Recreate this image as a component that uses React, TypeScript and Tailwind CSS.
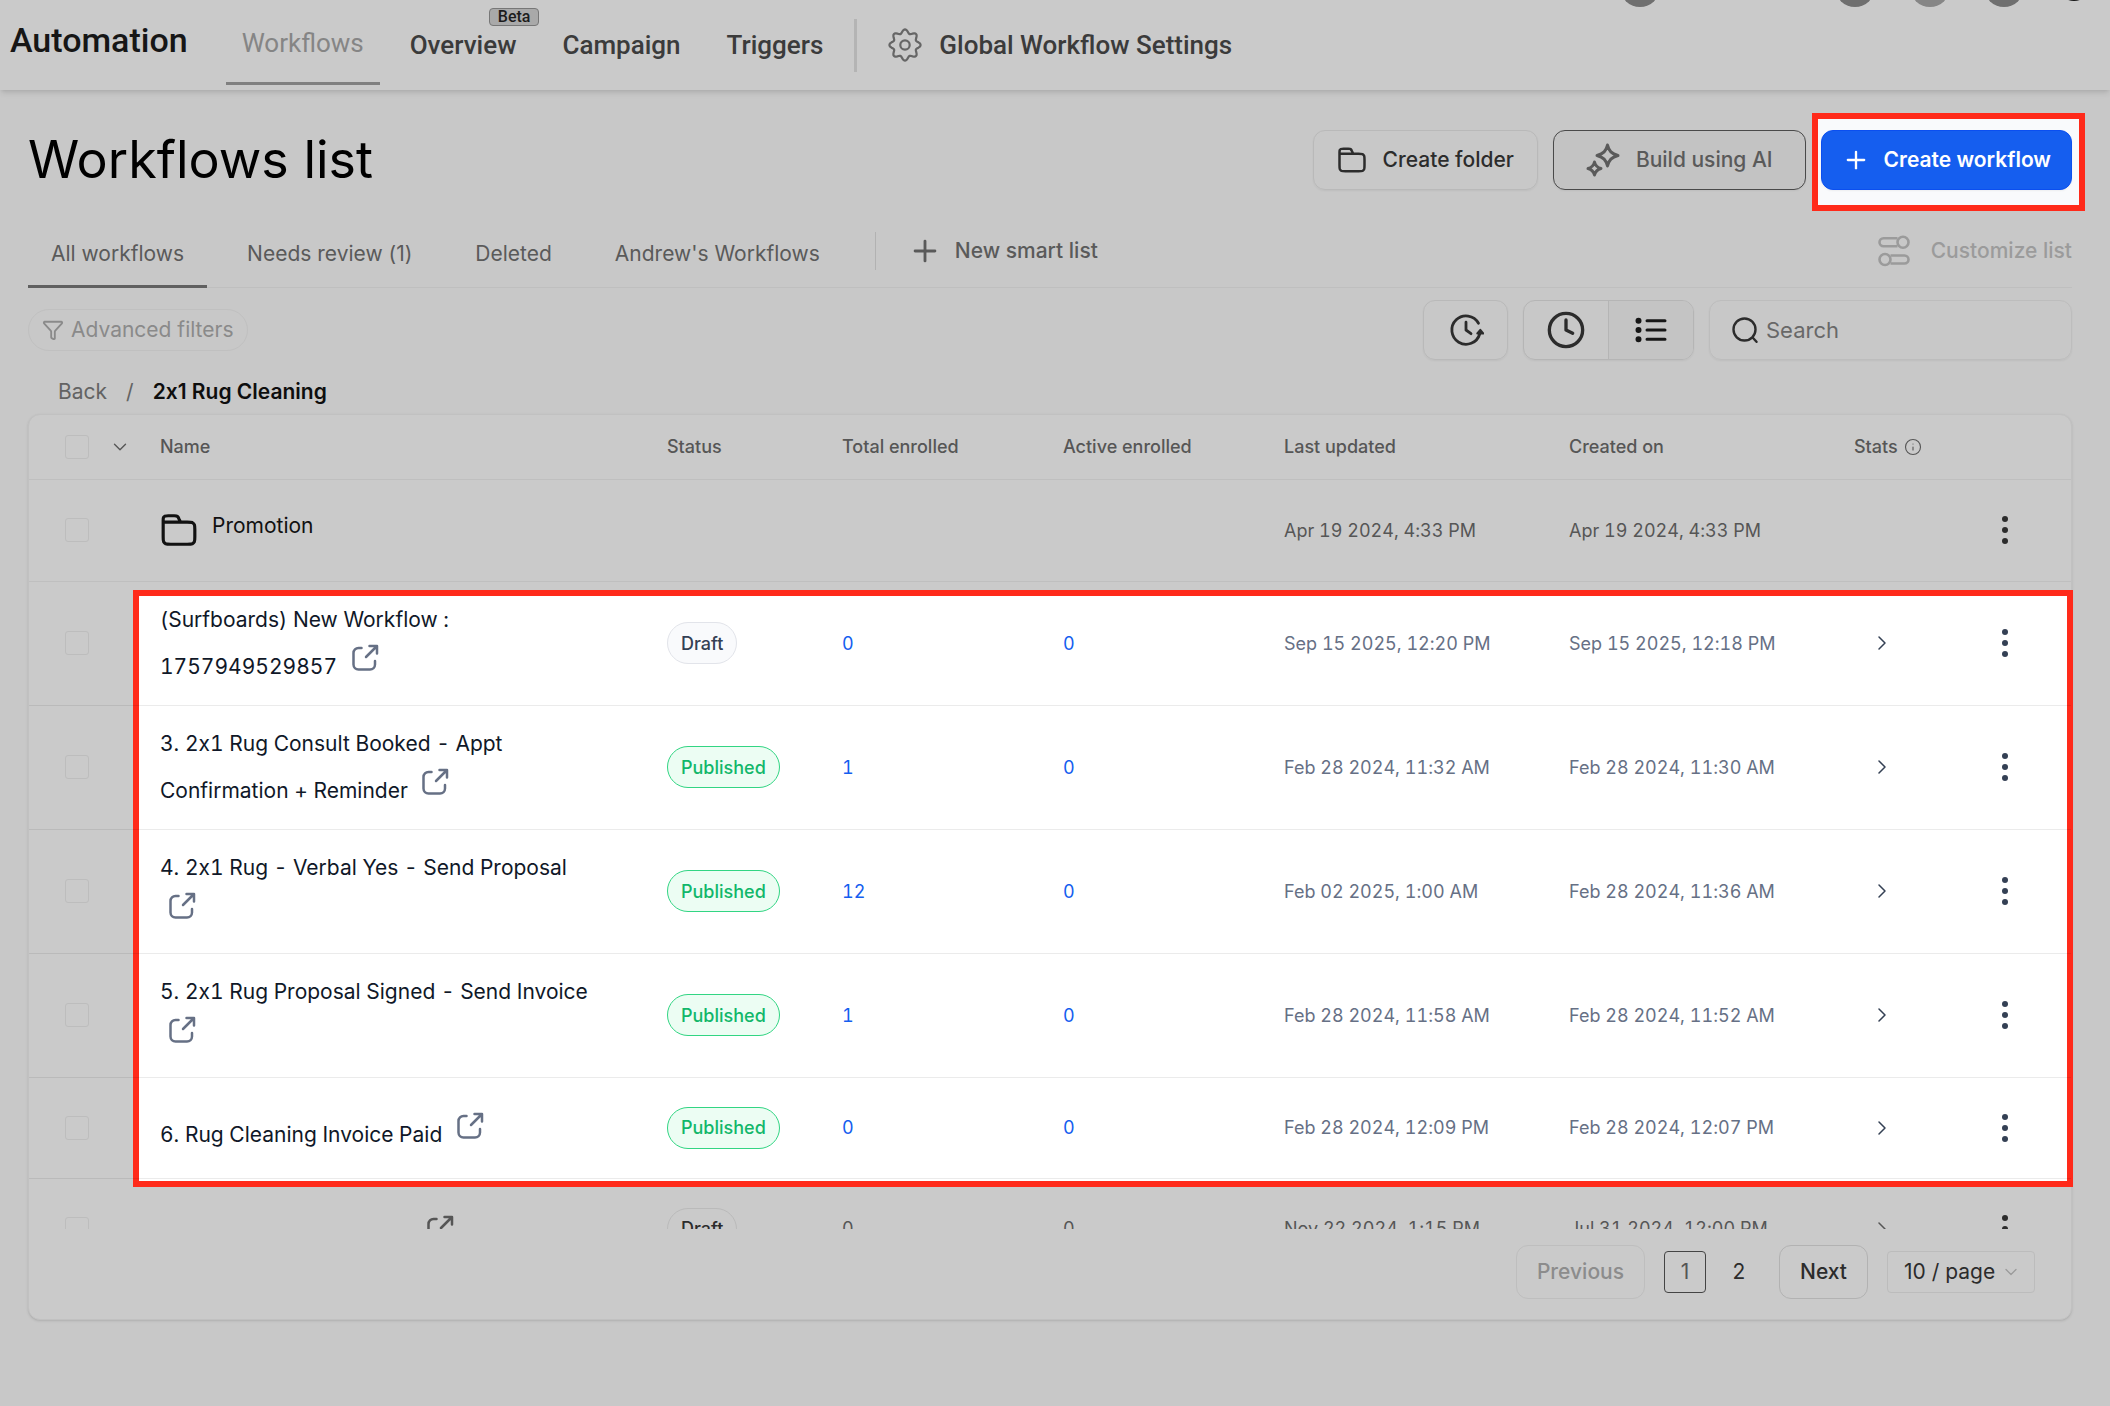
import { ChevronDown, ChevronRight, Clock, Funnel, Info, Plus } from "lucide-react";

type Row = {
  name: string;
  status: "Draft" | "Published";
  total: string;
  active: string;
  updated: string;
  created: string;
  tall?: boolean;
};

const rows: Row[] = [
  { name: "(Surfboards) New Workflow : 1757949529857", status: "Draft", total: "0", active: "0", updated: "Sep 15 2025, 12:20 PM", created: "Sep 15 2025, 12:18 PM", tall: true },
  { name: "3. 2x1 Rug Consult Booked - Appt Confirmation + Reminder", status: "Published", total: "1", active: "0", updated: "Feb 28 2024, 11:32 AM", created: "Feb 28 2024, 11:30 AM", tall: true },
  { name: "4. 2x1 Rug - Verbal Yes - Send Proposal", status: "Published", total: "12", active: "0", updated: "Feb 02 2025, 1:00 AM", created: "Feb 28 2024, 11:36 AM", tall: true },
  { name: "5. 2x1 Rug Proposal Signed - Send Invoice", status: "Published", total: "1", active: "0", updated: "Feb 28 2024, 11:58 AM", created: "Feb 28 2024, 11:52 AM", tall: true },
  { name: "6. Rug Cleaning Invoice Paid", status: "Published", total: "0", active: "0", updated: "Feb 28 2024, 12:09 PM", created: "Feb 28 2024, 12:07 PM" },
];

// Outline of the eight-lobed gear
const gearPoints = Array.from({ length: 96 }, (_, i) => {
  const angle = (i / 96) * Math.PI * 2;
  const radius = 13.7 + 1.9 * Math.cos(8 * angle);
  return `${(18 + radius * Math.sin(angle)).toFixed(2)},${(18 - radius * Math.cos(angle)).toFixed(2)}`;
}).join(" ");

function GearIcon({ className }: { className?: string }) {
  return (
    <svg viewBox="0 0 36 36" fill="none" stroke="currentColor" strokeWidth="2.200" strokeLinejoin="round" className={className}>
      <polygon points={gearPoints} />
      <circle cx="18" cy="18" r="4.700" />
    </svg>
  );
}

function FolderIcon({ className }: { className?: string }) {
  return (
    <svg viewBox="0 0 24 24" fill="none" stroke="currentColor" strokeWidth="2" strokeLinecap="round" strokeLinejoin="round" className={className}>
      <path d="M13 7l-1.1-2.2c-.3-.7-.5-1-.7-1.2a2 2 0 0 0-.8-.5C10.100 3 9.700 3 9 3H5.200c-1.100 0-1.700 0-2.100.2a2 2 0 0 0-.9.9C2 4.500 2 5.100 2 6.200V7m0 0h15.200c1.700 0 2.500 0 3.200.3a3 3 0 0 1 1.300 1.300c.3.700.3 1.500.3 3.200v4.400c0 1.700 0 2.500-.3 3.200a3 3 0 0 1-1.300 1.300c-.7.3-1.500.3-3.200.3H6.800c-1.700 0-2.500 0-3.200-.3a3 3 0 0 1-1.300-1.300C2 18.700 2 17.900 2 16.200V7z" />
    </svg>
  );
}

function SparkleIcon({ className }: { className?: string }) {
  return (
    <svg viewBox="0 0 34 34" fill="none" stroke="currentColor" strokeWidth="3" strokeLinejoin="round" className={className}>
      <path d="M21.500 2c1.500 6 4 8.800 10.500 10.500-6.500 1.700-9 4.500-10.500 10.500-1.500-6-4-8.800-10.500-10.500C17.500 10.800 20 8 21.500 2z" />
      <path d="M8.500 19c.9 3.800 2.500 5.500 6.500 6.500-4 1-5.600 2.700-6.500 6.500-.9-3.800-2.500-5.500-6.500-6.500 4-1 5.600-2.700 6.500-6.500z" />
    </svg>
  );
}

function TogglesIcon({ className }: { className?: string }) {
  return (
    <svg viewBox="0 0 32 32" fill="none" stroke="currentColor" strokeWidth="2.600" className={className}>
      <path d="M19.500 3.200H5.500a4 4 0 0 0 0 8h14M12.500 20.500h14a4 4 0 0 1 0 8h-14" />
      <circle cx="25" cy="7.200" r="5.500" />
      <circle cx="7" cy="24.500" r="5.500" />
    </svg>
  );
}

function OpenIcon({ className }: { className?: string }) {
  return (
    <svg viewBox="0 0 28 28" fill="none" stroke="currentColor" strokeWidth="2.500" strokeLinecap="round" strokeLinejoin="round" className={className}>
      <path d="M10.500 4H7.500a5 5 0 0 0-5 5v11.500a5 5 0 0 0 5 5H19a5 5 0 0 0 5-5V17" />
      <path d="M18.500 2H26v7.500M25.500 2.500L15 13" />
    </svg>
  );
}

function ClockForward({ className }: { className?: string }) {
  return (
    <svg viewBox="0 0 36 36" fill="none" stroke="currentColor" strokeWidth="2.800" strokeLinecap="round" strokeLinejoin="round" className={className}>
      <path d="M30.500 11.200A14.200 14.200 0 1 0 31.700 22M18 10.200V18l5 3.700" />
      <path d="M32.300 17.800l3 3.600h-6z" fill="currentColor" strokeWidth="2" />
    </svg>
  );
}

function SearchIcon({ className }: { className?: string }) {
  return (
    <svg viewBox="0 0 26 26" fill="none" stroke="currentColor" strokeWidth="2.400" strokeLinecap="round" className={className}>
      <circle cx="12.500" cy="12.500" r="11" />
      <path d="M20.800 20.800l3.700 4" />
    </svg>
  );
}

function BulletList({ className }: { className?: string }) {
  return (
    <svg viewBox="0 0 32 32" fill="none" stroke="currentColor" strokeLinecap="round" className={className}>
      <path d="M12 6.700h18M12 16h18M12 25.300h18" strokeWidth="3" />
      <path d="M3.500 6.700h.01M3.500 16h.01M3.500 25.300h.01" strokeWidth="6" />
    </svg>
  );
}

function Dots() {
  return (
    <button aria-label="Row actions" className="flex w-full justify-center">
      <svg viewBox="0 0 8 30" fill="currentColor" className="h-[30px] w-2">
        <circle cx="4" cy="4" r="3" />
        <circle cx="4" cy="15" r="3" />
        <circle cx="4" cy="26" r="3" />
      </svg>
    </button>
  );
}

function Tick({ label }: { label: string }) {
  return (
    <input
      type="checkbox"
      aria-label={label}
      className="block size-6 shrink-0 appearance-none rounded-[3px] border border-[#bdbdbd]"
    />
  );
}

function Badge({ status, dim }: { status: Row["status"]; dim?: boolean }) {
  const tone = dim
    ? "border-[#bababa] text-[#2c2c2c]"
    : status === "Draft"
      ? "border-[#e2e4ea] bg-[#f9fafc] text-[#344054]"
      : "border-[#32d583] bg-[#ecfdf3] text-[#12b76a]";
  return <span className={`inline-flex h-[42px] items-center rounded-full border px-[13px] font-medium ${tone}`}>{status}</span>;
}

const navLink = "font-medium text-[#3b3b3b]";
const button = "flex h-[60px] items-center rounded-xl border font-medium shadow-xs";

export default function App() {
  return (
    <div className="min-h-screen bg-[#c8c8c8] font-['Inter',sans-serif] text-[21px] text-[#2c2c2c] [font-variant-ligatures:no-contextual]">
      {/* Top navigation */}
      <header className="relative flex h-[90px] items-start overflow-hidden bg-[#cacaca] pl-[10px] font-['Roboto',sans-serif] text-[26px] shadow-md">
        <h1 className="pt-[22px] text-[34px] leading-9 font-medium text-[#161616]">Automation</h1>
        <nav className="ml-[38px] flex h-[90px] items-center">
          <a href="#workflows" className="flex h-[85px] items-center self-start border-b-[3px] border-[#808080] px-4 pt-1 text-[#858585]">Workflows</a>
          <a href="#overview" className={`relative ml-[30px] ${navLink}`}>
            Overview
            <span className="absolute -top-[18px] -right-[23px] rounded border border-[#777] bg-[#a9a9a9] px-2 text-base leading-4 text-[#1c1c1c]">Beta</span>
          </a>
          <a href="#campaign" className={`ml-[46px] ${navLink}`}>Campaign</a>
          <a href="#triggers" className={`ml-[46px] ${navLink}`}>Triggers</a>
          <span className="ml-[31px] h-[53px] w-[3px] bg-[#b4b4b4]" />
          <a href="#settings" className={`ml-[30px] flex items-center gap-4 ${navLink}`}>
            <GearIcon className="size-9 text-[#666]" />
            Global Workflow Settings
          </a>
        </nav>
        {/* Round actions scrolled past the top edge */}
        <div className="absolute -top-[33px] right-[19px] flex">
          <span className="mr-[175px] size-10 rounded-full bg-[#6f6f6f]" />
          <span className="mr-[35px] size-10 rounded-full bg-[#6f6f6f]" />
          <span className="mr-[34px] size-10 rounded-full bg-[#868686]" />
          <span className="mr-[33px] size-10 rounded-full bg-[#6f6f6f]" />
          <span className="size-[34px] rounded-full bg-[#161616]" />
        </div>
      </header>

      <main className="pr-[38px] pl-7">
        <div className="flex items-center justify-between pt-10">
          <h2 className="text-[52px] leading-[60px] text-black">Workflows list</h2>
          <div className="flex gap-[15px]">
            <button className={`${button} gap-4 border-[#b9b9b9] px-[23px]`}>
              <FolderIcon className="size-[30px]" />
              Create folder
            </button>
            <button className={`${button} gap-4 border-[#4a4a4a] bg-[#c3c3c3] px-8 text-[#5a5a5a]`}>
              <SparkleIcon className="size-[34px]" />
              Build using AI
            </button>
            <div className="relative">
              <span className="absolute -top-[17px] -right-[13px] -bottom-[21px] -left-[9px] border-6 border-[#ff2a1a] bg-[#f9fafc]" />
              <button className={`relative ${button} gap-[14px] border-[#0b4ff0] bg-[#155eef] px-5 font-semibold text-white`}>
                <Plus className="size-7" strokeWidth={2} />
                Create workflow
              </button>
            </div>
          </div>
        </div>

        {/* Smart list tabs */}
        <div className="mt-[30px] flex h-[68px] items-stretch border-b border-[#bfbfbf] text-[#5a5a5a]">
          <nav className="flex gap-[17px]">
            <a href="#all" className="-mb-px flex items-center border-b-[3px] border-[#606060] px-[23px] pt-[3px]">All workflows</a>
            <a href="#review" className="flex items-center px-[23px]">Needs review (1)</a>
            <a href="#deleted" className="flex items-center px-[23px]">Deleted</a>
            <a href="#andrew" className="flex items-center px-[23px]">Andrew's Workflows</a>
          </nav>
          <span className="mt-[12px] ml-[32px] h-[38px] w-px bg-[#b2b2b2]" />
          <button className="ml-[32px] flex h-[62px] items-center gap-[13px] font-medium">
            <Plus className="size-[34px]" strokeWidth={2} />
            New smart list
          </button>
          <button className="ml-auto flex h-[62px] items-center gap-[21px] font-medium text-[#9b9b9b]">
            <TogglesIcon className="size-8" />
            Customize list
          </button>
        </div>

        {/* Filters */}
        <div className="mt-3 flex items-center">
          <button className="flex h-[42px] items-center gap-[7px] rounded-full border border-[#c0c0c0] px-[13px] text-[#8a8a8a]">
            <Funnel className="size-[22px]" strokeWidth={2} />
            Advanced filters
          </button>
          <button aria-label="Scheduled" className={`${button} ml-auto w-[85px] justify-center border-[#b9b9b9]`}>
            <ClockForward className="size-9" />
          </button>
          <div className="ml-[15px] flex h-[60px] overflow-hidden rounded-xl border border-[#b5b5b5] shadow-xs">
            <button aria-label="Recent" className="flex w-[85px] items-center justify-center border-r border-[#b5b5b5]">
              <Clock className="size-10" strokeWidth={2} />
            </button>
            <button aria-label="List" className="flex w-[84px] items-center justify-center bg-[#c4c4c4] text-[#161616]">
              <BulletList className="size-8" />
            </button>
          </div>
          <label className="ml-[15px] flex h-[60px] w-[363px] items-center gap-2 rounded-xl border border-[#bdbdbd] px-[22px] shadow-xs">
            <SearchIcon className="size-[26px] shrink-0" />
            <input aria-label="Search" placeholder="Search" className="w-full bg-transparent text-[22px] outline-none placeholder:text-[#686868]" />
          </label>
        </div>

        <div className="mt-[15px] flex h-[34px] items-center gap-[19px] pl-[30px] text-[#636363]">
          <a href="#back">Back</a>
          <span>/</span>
          <span className="font-semibold text-[#0e0e0e]">2x1 Rug Cleaning</span>
        </div>

        {/* Workflow table */}
        <section className="relative isolate mt-[5px] rounded-xl border border-[#c1c1c1] bg-[#cacaca] shadow-sm">
          <div className="absolute top-[175px] right-[-2px] left-[104px] -z-10 h-[597px] border-6 border-[#ff2a1a] bg-white" />
          <div className="h-[814px] overflow-hidden">
            <table className="w-full table-fixed border-collapse text-left text-[18px]">
              <colgroup>
                <col className="w-[115px]" />
                <col />
                <col className="w-[175px]" />
                <col className="w-[221px]" />
                <col className="w-[221px]" />
                <col className="w-[285px]" />
                <col className="w-[285px]" />
                <col className="w-[101px]" />
                <col className="w-[132px]" />
              </colgroup>
              <thead>
                <tr className="h-16 border-b border-black/5 text-[#565656] [&>th]:px-4 [&>th]:font-medium">
                  <th>
                    <span className="flex items-center gap-[20px] pl-5">
                      <Tick label="Select all" />
                      <ChevronDown className="size-[22px] shrink-0" strokeWidth={1.5} />
                    </span>
                  </th>
                  <th>Name</th>
                  <th>Status</th>
                  <th>Total enrolled</th>
                  <th>Active enrolled</th>
                  <th>Last updated</th>
                  <th>Created on</th>
                  <th colSpan={2}>
                    <span className="flex items-center gap-[6px]">
                      Stats <Info className="size-[18px]" strokeWidth={1.5} />
                    </span>
                  </th>
                </tr>
              </thead>
              <tbody className="tabular-nums [&_td]:px-4">
                <tr className="h-[102px] border-b border-black/5 text-[#565656]">
                  <td><span className="flex pl-5"><Tick label="Select Promotion" /></span></td>
                  <td colSpan={4}>
                    <span className="flex items-center gap-[14px] text-[#111]">
                      <FolderIcon className="size-[38px]" />
                      <a href="#promotion" className="pb-2 text-[21px]">Promotion</a>
                    </span>
                  </td>
                  <td>Apr 19 2024, 4:33 PM</td>
                  <td>Apr 19 2024, 4:33 PM</td>
                  <td />
                  <td className="text-[#2c2c2c]"><Dots /></td>
                </tr>
                {rows.map((row) => (
                  <tr key={row.name} className={`border-b border-black/8 text-[#667085] ${row.tall ? "h-[124px]" : "h-[101px]"}`}>
                    <td><span className="flex pl-5"><Tick label={`Select ${row.name}`} /></span></td>
                    <td>
                      <div className="max-w-[436px] text-[21px] leading-8 text-[#101828]">
                        {row.name}{" "}
                        <a href="#open" aria-label={`Open ${row.name}`} className="ml-2 inline-flex h-11 items-center align-[2px] text-[#667085]">
                          <OpenIcon className="size-7" />
                        </a>
                      </div>
                    </td>
                    <td><Badge status={row.status} /></td>
                    <td><a href="#total" className="text-[#155eef]">{row.total}</a></td>
                    <td><a href="#active" className="text-[#155eef]">{row.active}</a></td>
                    <td>{row.updated}</td>
                    <td>{row.created}</td>
                    <td>
                      <button aria-label="Show stats" className="flex w-14 justify-center text-[#344054]">
                        <ChevronRight className="size-6" strokeWidth={1.5} />
                      </button>
                    </td>
                    <td className="text-[#344054]"><Dots /></td>
                  </tr>
                ))}
                <tr className="h-[101px] text-[#565656]">
                  <td><span className="flex pl-5"><Tick label="Select workflow" /></span></td>
                  <td>
                    <a href="#open" aria-label="Open workflow" className="ml-[266px] inline-flex h-11 items-center">
                      <OpenIcon className="size-7" />
                    </a>
                  </td>
                  <td><Badge status="Draft" dim /></td>
                  <td>0</td>
                  <td>0</td>
                  <td>Nov 22 2024, 1:15 PM</td>
                  <td>Jul 31 2024, 12:00 PM</td>
                  <td>
                    <span className="flex w-14 justify-center"><ChevronRight className="size-6" strokeWidth={1.5} /></span>
                  </td>
                  <td className="text-[#2c2c2c]"><Dots /></td>
                </tr>
              </tbody>
            </table>
          </div>

          {/* Pagination */}
          <div className="flex h-[90px] items-center justify-end pr-9 pb-1">
            <button className="h-[54px] rounded-xl border border-[#bebebe] px-5 font-medium text-[#8c8c8c]">Previous</button>
            <button className="ml-[19px] h-[42px] w-[42px] rounded border border-[#444] text-[#555]">1</button>
            <button className="ml-[12px] h-[42px] w-[42px]">2</button>
            <button className="ml-[19px] h-[54px] rounded-xl border border-[#b2b2b2] px-5 font-medium">Next</button>
            <div className="relative ml-[19px]">
              <select aria-label="Page size" className="h-[42px] w-[148px] appearance-none rounded border border-[#bcbcbc] bg-transparent pl-4">
                <option>10 / page</option>
              </select>
              <ChevronDown className="pointer-events-none absolute top-[11px] right-[14px] size-5 text-[#9a9a9a]" strokeWidth={1.5} />
            </div>
          </div>
        </section>
      </main>
    </div>
  );
}
